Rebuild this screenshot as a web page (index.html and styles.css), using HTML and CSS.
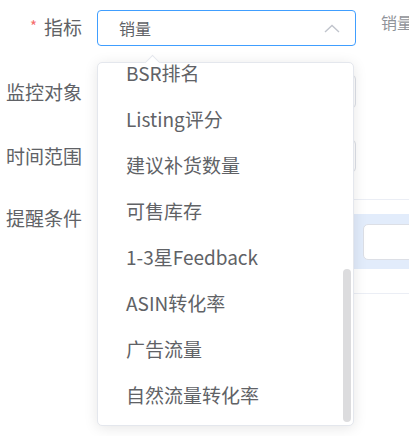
FILE: index.html
```html
<!DOCTYPE html>
<html lang="zh-CN">
<head>
<meta charset="utf-8">
<link rel="stylesheet" href="styles.css">
</head>
<body>
<div class="form">
  <div class="row row1">
    <div class="label"><span class="star">*</span>指标</div>
    <div class="select focused">
      <span class="value">销量</span>
      <svg class="chev" width="16" height="9" viewBox="0 0 16 9"><polyline points="1,8 8,1.5 15,8" fill="none" stroke="#c0c4cc" stroke-width="1.4"/></svg>
    </div>
    <div class="hint">销量</div>
  </div>
  <div class="row row2">
    <div class="label">监控对象</div>
    <div class="select plain h33"></div>
  </div>
  <div class="row row3">
    <div class="label">时间范围</div>
    <div class="select plain h32"></div>
  </div>
  <div class="row row4">
    <div class="label">提醒条件</div>
    <div class="table">
      <div class="gap-top"></div>
      <div class="band"><div class="cell-input"></div></div>
      <div class="gap-bottom"></div>
    </div>
  </div>
</div>

<div class="popper">
  <div class="arrow"></div>
  <div class="viewport">
    <ul class="list">
      <li>BSR排名</li>
      <li>Listing评分</li>
      <li>建议补货数量</li>
      <li>可售库存</li>
      <li>1-3星Feedback</li>
      <li>ASIN转化率</li>
      <li>广告流量</li>
      <li>自然流量转化率</li>
    </ul>
    <div class="thumb"></div>
  </div>
</div>
</body>
</html>
```
FILE: styles.css
```css
* { box-sizing: border-box; }
html, body {
  margin: 0;
  padding: 0;
  background: #fff;
  width: 409px;
  height: 436px;
  overflow: hidden;
  font-family: "Noto Sans CJK SC", "Noto Sans", sans-serif;
  color: #606266;
}
.form {
  padding-top: 10px;
}
.row {
  display: flex;
  align-items: center;
}
.label {
  width: 97px;
  flex: none;
  text-align: right;
  padding-right: 15px;
  font-size: 19px;
  line-height: 24px;
  color: #606266;
  white-space: nowrap;
}
.star {
  color: #f56c6c;
  font-size: 15px;
  margin-right: 7px;
  position: relative;
  top: -3px;
}
.select {
  width: 259px;
  flex: none;
  border: 1px solid #dcdfe6;
  border-radius: 4px;
  background: #fff;
  display: flex;
  align-items: center;
}
.select.focused {
  height: 36px;
  border-color: #409eff;
  padding-left: 21px;
  padding-right: 15px;
}
.value {
  flex: 1;
  font-size: 16px;
  line-height: 20px;
  color: #606266;
}
.chev { display: block; }
.hint {
  align-self: flex-start;
  margin-left: 25px;
  font-size: 16px;
  line-height: 24px;
  color: #909399;
  white-space: nowrap;
}
.row2 { margin-top: 29px; }
.h33 { height: 33px; }
.row3 { margin-top: 32px; }
.h32 { height: 32px; }
.row4 {
  margin-top: 27px;
  align-items: flex-start;
}
.row4 .label { line-height: 38px; }
.table {
  flex: 1;
  border-top: 1px solid #ebeef5;
  border-bottom: 1px solid #ebeef5;
  margin-right: -40px;
}
.gap-top { height: 14px; }
.band {
  background: #e2ecfb;
  height: 55px;
  padding: 10px 0 9px 266px;
}
.cell-input {
  height: 36px;
  background: #fff;
  border: 1px solid #dcdfe6;
  border-radius: 5px;
}
.gap-bottom { height: 24px; }

.popper {
  position: absolute;
  left: 97px;
  top: 62px;
  width: 257px;
  height: 364px;
  background: #fff;
  border: 1px solid #e4e7ed;
  border-radius: 5px;
  box-shadow: 0 2px 14px 0 rgba(0, 0, 0, 0.1);
}
.arrow {
  position: absolute;
  left: 49px;
  top: -6px;
  width: 11px;
  height: 11px;
  background: #fff;
  border-left: 1px solid #e4e7ed;
  border-top: 1px solid #e4e7ed;
  transform: rotate(45deg);
}
.viewport {
  position: relative;
  height: 100%;
  overflow: hidden;
  border-radius: 5px;
}
.list {
  list-style: none;
  margin: -13px 0 0 0;
  padding: 0;
}
.list li {
  height: 46px;
  line-height: 46px;
  padding-left: 28px;
  font-size: 19px;
  color: #606266;
  white-space: nowrap;
}
.thumb {
  position: absolute;
  right: 2px;
  top: 206px;
  width: 8px;
  height: 153px;
  border-radius: 4px;
  background: #dcdcde;
}
```
